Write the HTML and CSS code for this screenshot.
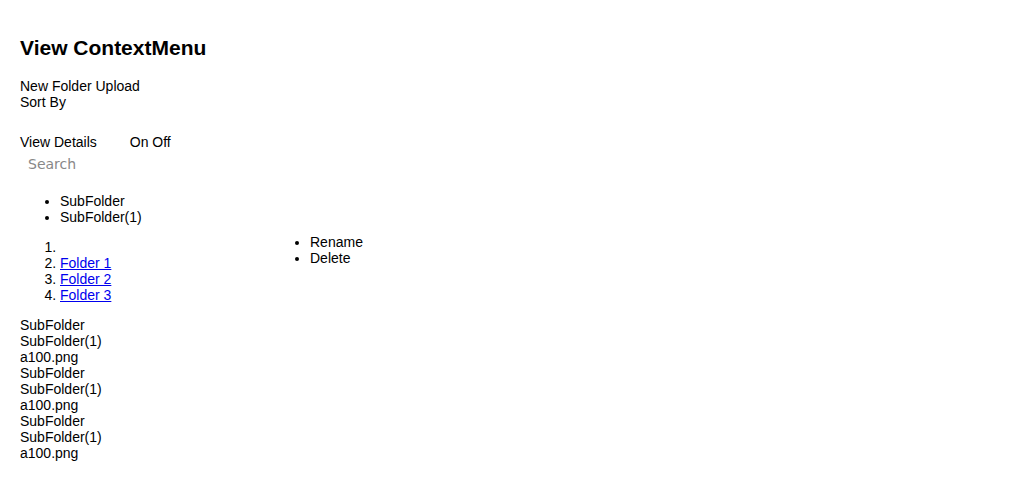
FILE: index.html
```html
<!DOCTYPE html>
<html>
<head>
<meta charset="utf-8">
<link rel="stylesheet" href="styles.css">
</head>
<body>
<div class="page">
  <h2 class="title">View ContextMenu</h2>
  <div class="toolbar">
    <div class="toolbar-row"><span>New Folder</span> <span>Upload</span></div>
    <div class="toolbar-row"><span>Sort By</span></div>
  </div>
  <div class="view-row">
    <span class="view-label">View Details</span>
    <span class="switch">On Off</span>
  </div>
  <input class="search" type="text" placeholder="Search">
  <ul class="tree">
    <li>SubFolder</li>
    <li>SubFolder(1)</li>
  </ul>
  <div class="content">
    <ol class="crumbs">
      <li></li>
      <li><a href="#">Folder 1</a></li>
      <li><a href="#">Folder 2</a></li>
      <li><a href="#">Folder 3</a></li>
    </ol>
    <ul class="menu">
      <li>Rename</li>
      <li>Delete</li>
    </ul>
  </div>
  <div class="files">
    <div>SubFolder</div>
    <div>SubFolder(1)</div>
    <div>a100.png</div>
    <div>SubFolder</div>
    <div>SubFolder(1)</div>
    <div>a100.png</div>
    <div>SubFolder</div>
    <div>SubFolder(1)</div>
    <div>a100.png</div>
  </div>
</div>
</body>
</html>
```

FILE: styles.css
```css
html, body {
  margin: 0;
  padding: 0;
  background: #ffffff;
}

.page {
  padding: 20px;
  font-family: "Liberation Sans", Arial, sans-serif;
  font-size: 14px;
  line-height: 16px;
  color: #000000;
}

.title {
  font-size: 21px;
  line-height: 24px;
  font-weight: bold;
  margin: 16px 0 18px 0;
}

.toolbar-row {
  height: 16px;
}

.view-row {
  margin-top: 24px;
  display: flex;
  height: 16px;
}

.switch {
  margin-left: 33px;
}

.search {
  display: block;
  border: none;
  outline: none;
  background: transparent;
  margin: 0;
  padding: 6px 8px;
  height: 16px;
  font-family: "DejaVu Sans", sans-serif;
  font-size: 14px;
  color: #000000;
}

.search::placeholder {
  color: #888888;
}

.tree {
  margin: 15px 0 14px 0;
  padding-left: 40px;
}

.content {
  position: relative;
}

.crumbs {
  margin: 0;
  padding-left: 40px;
  height: 64px;
}

.crumbs a {
  color: #0000ee;
}

.menu {
  position: absolute;
  left: 250px;
  top: -5px;
  margin: 0;
  padding-left: 40px;
}

.files {
  margin-top: 14px;
}
```
